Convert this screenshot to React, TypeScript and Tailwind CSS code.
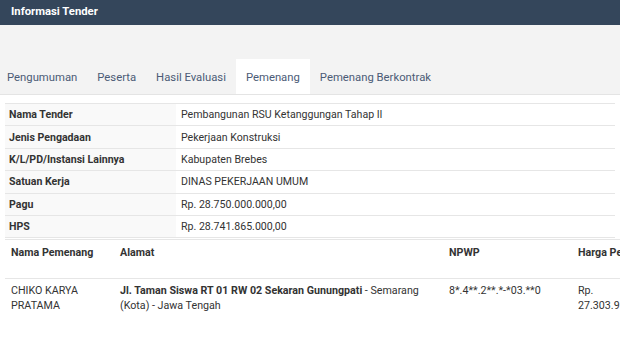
import React from "react";

const info: [string, string][] = [
  ["Nama Tender", "Pembangunan RSU Ketanggungan Tahap II"],
  ["Jenis Pengadaan", "Pekerjaan Konstruksi"],
  ["K/L/PD/Instansi Lainnya", "Kabupaten Brebes"],
  ["Satuan Kerja", "DINAS PEKERJAAN UMUM"],
  ["Pagu", "Rp. 28.750.000.000,00"],
  ["HPS", "Rp. 28.741.865.000,00"],
];

const tabs = ["Pengumuman", "Peserta", "Hasil Evaluasi", "Pemenang", "Pemenang Berkontrak"];

export default function App() {
  return (
    <div className="h-[347px] w-[620px] overflow-hidden bg-white font-['Roboto',sans-serif] text-[11px] text-[#333]">
      <div className="flex h-[25px] items-center bg-[#34465b] pl-[11px] text-[11.3px] font-bold text-white">
        Informasi Tender
      </div>

      <div className="flex h-[70px] items-end border-b border-[#e4e4e4] bg-[#f3f3f3]">
        <div className="-ml-[3px] flex">
          {tabs.map((t) => (
            <div
              key={t}
              className={`flex h-[35px] items-center px-[10px] pt-[3px] text-[11.3px] text-[#4b5b76] ${t === "Pemenang" ? "bg-white" : ""}`}
            >
              {t}
            </div>
          ))}
        </div>
      </div>

      <div className="px-[5px] pt-[8px]">
        <table className="w-full border-collapse text-[10.6px]">
          <tbody>
            {info.map(([k, v]) => (
              <tr key={k} className="h-[22.4px] border-t border-[#e6e6e6]">
                <td className="w-[171px] bg-[#f9f9f9] pl-[4px] pt-[1px] font-bold">{k}</td>
                <td className="pl-[5px] pt-[1px]">{v}</td>
              </tr>
            ))}
            <tr className="border-t border-[#e6e6e6]">
              <td colSpan={2} className="h-[1px]" />
            </tr>
          </tbody>
        </table>

        <table className="w-[720px] border-collapse text-[10.7px]">
          <thead>
            <tr className="h-[39px] border-y border-[#e6e6e6] text-left align-top">
              <th className="w-[115px] pl-[6px] pt-[5px] font-bold">Nama Pemenang</th>
              <th className="w-[329px] pt-[5px] font-bold">Alamat</th>
              <th className="w-[129px] pt-[5px] font-bold">NPWP</th>
              <th className="pt-[5px] font-bold">Harga Penawaran</th>
            </tr>
          </thead>
          <tbody>
            <tr className="align-top leading-[15px]">
              <td className="pl-[6px] pt-[4px]">
                CHIKO KARYA
                <br />
                PRATAMA
              </td>
              <td className="pt-[4px] pr-[8px]">
                <b>Jl. Taman Siswa RT 01 RW 02 Sekaran Gunungpati</b> - Semarang (Kota) - Jawa Tengah
              </td>
              <td className="pt-[4px]">8*.4**.2**.*-*03.**0</td>
              <td className="pt-[4px]">
                Rp.
                <br />
                27.303.9
              </td>
            </tr>
          </tbody>
        </table>
      </div>
    </div>
  );
}
